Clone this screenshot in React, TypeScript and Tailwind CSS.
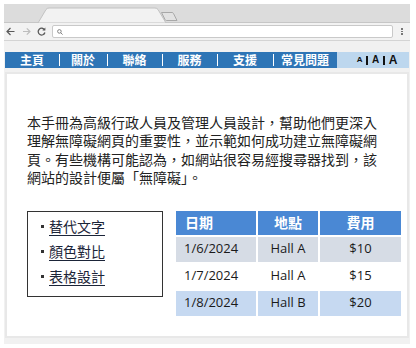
import React from 'react'

// Nav bar items with pixel widths measured from the mock
const navItems = [
  { label: '主頁', w: 'w-[54px]' },
  { label: '關於', w: 'w-[48px]' },
  { label: '聯絡', w: 'w-[55px]' },
  { label: '服務', w: 'w-[55px]' },
  { label: '支援', w: 'w-[56px]' },
  { label: '常見問題', w: 'w-[64px]' },
]

const links = ['替代文字', '顏色對比', '表格設計']

const rows = [
  { date: '1/6/2024', place: 'Hall A', fee: '$10', bg: 'bg-[#d6dce5]' },
  { date: '1/7/2024', place: 'Hall A', fee: '$15', bg: 'bg-white' },
  { date: '1/8/2024', place: 'Hall B', fee: '$20', bg: 'bg-[#c6d9f1]' },
]

const cjk = 'font-["Noto_Sans_CJK_TC","Noto_Sans",sans-serif]'

function TabStrip() {
  return (
    <svg width="406" height="19" className="block">
      <rect x="0" y="0" width="406" height="19" fill="#dcdcdc" />
      <line x1="0" y1="18.5" x2="406" y2="18.5" stroke="#c6c6c6" />
      <path d="M34 19 L42 5.5 Q43 4 45 4 L151 4 Q153 4 154 5.5 L162 19 Z" fill="#f2f2f2" stroke="#c2c2c2" />
      <path d="M157.5 8.5 L168 8.5 Q169 8.5 169.5 9.5 L173 16.5 L162.5 16.5 Q161.5 16.5 161 15.5 Z" fill="#e2e2e2" stroke="#a8a8a8" />
    </svg>
  )
}

function AddressRow() {
  return (
    <div className="h-[17px] flex items-center bg-[#f2f2f2]">
      <svg width="9" height="9" viewBox="0 0 9 9" className="ml-[2px]">
        <path d="M8.5 4.5 H1 M4.5 1 L1 4.5 L4.5 8" fill="none" stroke="#5a5a5a" strokeWidth="1.2" />
      </svg>
      <svg width="8" height="9" viewBox="0 0 8 9" className="ml-[8px]">
        <path d="M0 4.5 H7 M3.8 1.3 L7 4.5 L3.8 7.7" fill="none" stroke="#bdbdbd" strokeWidth="1.2" />
      </svg>
      <svg width="9" height="9" viewBox="0 0 9 9" className="ml-[6px]">
        <path d="M7.6 3 A3.4 3.4 0 1 0 7.9 5.5" fill="none" stroke="#5a5a5a" strokeWidth="1.3" />
        <path d="M8.4 0.6 L8.4 3.6 L5.4 3.6 Z" fill="#5a5a5a" />
      </svg>
      <div className="ml-[6px] w-[341px] h-[13px] bg-white border border-[#c9c9c9] rounded-[2px] flex items-center pl-[4px]">
        <svg width="6" height="6" viewBox="0 0 6 6">
          <circle cx="2.4" cy="2.4" r="1.8" fill="none" stroke="#777" strokeWidth="0.9" />
          <path d="M3.7 3.7 L5.6 5.6" stroke="#777" strokeWidth="0.9" />
        </svg>
      </div>
      <div className="ml-[8px] flex flex-col gap-[1px]">
        <span className="w-[1.5px] h-[1.5px] bg-[#777]" />
        <span className="w-[1.5px] h-[1.5px] bg-[#777]" />
        <span className="w-[1.5px] h-[1.5px] bg-[#777]" />
      </div>
    </div>
  )
}

export default function App() {
  return (
    <div className="w-[416px] h-[348px] bg-white pt-[4px] pl-[4px]">
      <div className="w-[406px] h-[340px] bg-[#f1f1f1] flex flex-col">
        <TabStrip />
        <AddressRow />
        <div className="h-px bg-[#d4d4d4]" />

        {/* Page area */}
        <div className="flex-1 pt-[11px] pl-[1px] pr-[1px]">
          {/* Navigation */}
          <nav className={`h-[16px] flex ${cjk}`}>
            <div className="flex items-center bg-[#2e75b6]">
              {navItems.map((item, i) => (
                <div key={item.label} className={`${item.w} h-full flex items-center relative`}>
                  {i > 0 && <span className="absolute left-0 top-[2px] w-px h-[12px] bg-white" />}
                  <span className="w-full text-center text-white text-[12px] leading-none font-bold">
                    {item.label}
                  </span>
                </div>
              ))}
            </div>
            <div className="flex-1 bg-[#bdd7ee] flex items-center justify-center pl-[8px] gap-[4px] font-['Liberation_Sans',sans-serif] font-bold text-[#111] leading-none">
              <span className="text-[8px]">A</span>
              <span className="w-[1.5px] h-[9px] bg-[#111]" />
              <span className="text-[10px]">A</span>
              <span className="w-[1.5px] h-[9px] bg-[#111]" />
              <span className="text-[12px]">A</span>
            </div>
          </nav>

          {/* Content panel */}
          <div className="mt-[4px] h-[266px] bg-white border-2 border-[#e8e8e8] pl-[20px] pt-[39px]">
            <p className={`w-[354px] text-[14px] leading-[18.4px] text-[#222] ${cjk}`}>
              本手冊為高級行政人員及管理人員設計，幫助他們更深入理解無障礙網頁的重要性，並示範如何成功建立無障礙網頁。有些機構可能認為，如網站很容易經搜尋器找到，該網站的設計便屬「無障礙」。
            </p>

            <div className="mt-[24px] flex items-start">
              {/* Link list */}
              <ul className={`w-[136px] h-[86px] border border-[#333] pt-[2px] pl-[13px] ${cjk}`}>
                {links.map((l) => (
                  <li key={l} className="h-[25px] flex items-center text-[14px] text-[#1b2438]">
                    <span className="w-[3px] h-[3px] bg-[#333] mr-[5px]" />
                    <a href="#" className="underline underline-offset-[3px]">{l}</a>
                  </li>
                ))}
              </ul>

              {/* Schedule table */}
              <table className="ml-[11px] -mt-[2px] border-separate border-spacing-[2px] text-[13px]">
                <thead>
                  <tr className={`bg-[#4a88d4] text-white text-[14px] font-bold h-[24px] ${cjk}`}>
                    <th className="w-[80px] text-left pl-[9px] font-bold">日期</th>
                    <th className="w-[60px] text-center font-bold">地點</th>
                    <th className="w-[81px] text-center font-bold">費用</th>
                  </tr>
                </thead>
                <tbody className="font-['Open_Sans',sans-serif] text-[#1a1a1a]">
                  {rows.map((r) => (
                    <tr key={r.date} className="h-[25px]">
                      <td className={`${r.bg} pl-[8px]`}>{r.date}</td>
                      <td className={`${r.bg} text-center`}>{r.place}</td>
                      <td className={`${r.bg} text-center`}>{r.fee}</td>
                    </tr>
                  ))}
                </tbody>
              </table>
            </div>
          </div>
        </div>
      </div>
    </div>
  )
}
